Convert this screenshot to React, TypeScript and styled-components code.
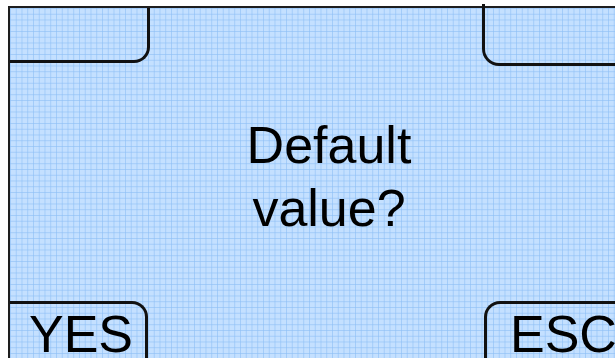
import styled, { createGlobalStyle } from 'styled-components';

const GlobalStyle = createGlobalStyle`
  html, body {
    margin: 0;
    padding: 0;
    background: #ffffff;
    overflow: hidden;
  }
  body {
    font-family: "Liberation Sans", Arial, sans-serif;
  }
`;

const Page = styled.div`
  width: 615px;
  height: 358px;
  padding: 6px 0 0 8px;
  box-sizing: border-box;
  overflow: hidden;
`;

// the LCD panel, wider than the window so its right side is cut off
const Screen = styled.div`
  width: 640px;
  height: 352px;
  box-sizing: border-box;
  border-top: 2px solid #1e1e1e;
  border-left: 2px solid #1e1e1e;
  background-color: #c4e0ff;
  background-image:
    linear-gradient(to right, rgba(140, 190, 245, 0.6) 1px, transparent 1px),
    linear-gradient(to bottom, rgba(140, 190, 245, 0.6) 1px, transparent 1px);
  background-size: 5.75px 5.75px;
  display: grid;
  grid-template-rows: auto 1fr auto;
  color: #000;
`;

const KeyRow = styled.div`
  display: flex;
  justify-content: space-between;
  align-items: flex-start;
`;

const TopKey = styled.div<{ $side: 'left' | 'right' }>`
  box-sizing: border-box;
  border-bottom: 3px solid #111;
  ${(p) =>
    p.$side === 'left'
      ? `
    width: 140px;
    height: 55px;
    border-right: 3px solid #111;
    border-bottom-right-radius: 16px;
  `
      : `
    width: 166px;
    height: 62px;
    margin-top: -4px;
    border-left: 3px solid #111;
    border-bottom-left-radius: 17px;
  `}
`;

const BottomKey = styled.div<{ $side: 'left' | 'right' }>`
  box-sizing: border-box;
  height: 57px;
  border-top: 3px solid #111;
  font-size: 52px;
  line-height: 48px;
  padding-top: 6px;
  white-space: nowrap;
  ${(p) =>
    p.$side === 'left'
      ? `
    width: 138px;
    padding-left: 19px;
    border-right: 3px solid #111;
    border-top-right-radius: 16px;
  `
      : `
    width: 164px;
    padding-left: 23px;
    border-left: 3px solid #111;
    border-top-left-radius: 16px;
  `}
`;

const Message = styled.div`
  align-self: start;
  text-align: center;
  font-size: 52px;
  line-height: 63px;
  padding-top: 48px;
`;

export default function App() {
  return (
    <Page>
      <GlobalStyle />
      <Screen>
        <KeyRow>
          <TopKey $side="left" />
          <TopKey $side="right" />
        </KeyRow>
        <Message>
          Default
          <br />
          value?
        </Message>
        <KeyRow>
          <BottomKey $side="left">YES</BottomKey>
          <BottomKey $side="right">ESC</BottomKey>
        </KeyRow>
      </Screen>
    </Page>
  );
}
